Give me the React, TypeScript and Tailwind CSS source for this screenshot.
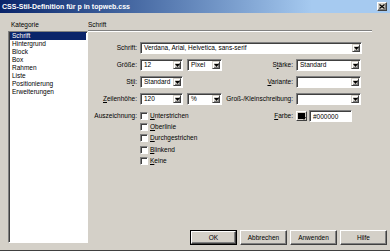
import React from "react";

const F = "font-['Liberation_Sans',Arial,sans-serif]";

function Arrow() {
  return (
    <div className="w-[8px] h-full shrink-0 bg-[#d4d0c8] border border-t-[#d4d0c8] border-l-[#d4d0c8] border-b-[#404040] border-r-[#404040] shadow-[inset_1px_1px_0_#ffffff,inset_-1px_-1px_0_#808080] flex items-center justify-center">
      <svg width="5" height="3" viewBox="0 0 5 3">
        <path d="M0 0h5L2.5 3z" fill="#000" />
      </svg>
    </div>
  );
}

function Combo({ className, text }: { className: string; text?: string }) {
  return (
    <div
      className={`h-[12px] flex bg-white border border-t-[#808080] border-l-[#808080] border-b-white border-r-white shadow-[inset_1px_1px_0_#404040] p-[1px] ${className}`}
    >
      <div className="flex-1 pl-[2px] text-[6.5px] leading-[8px] text-black whitespace-nowrap overflow-hidden">
        {text}
      </div>
      <Arrow />
    </div>
  );
}

function Check() {
  return (
    <div className="w-[8px] h-[8px] shrink-0 bg-white border border-t-[#808080] border-l-[#808080] border-b-white border-r-white shadow-[inset_1px_1px_0_#404040]" />
  );
}

function Btn({ children, def }: { children: React.ReactNode; def?: boolean }) {
  const inner = (
    <div className="w-full h-full flex items-center justify-center bg-[#d4d0c8] border border-t-white border-l-white border-b-[#404040] border-r-[#404040] shadow-[inset_-1px_-1px_0_#808080] text-[6.5px] leading-[8px] text-black">
      {children}
    </div>
  );
  if (def) {
    return <div className="w-[47px] h-[15px] border border-black">{inner}</div>;
  }
  return <div className="w-[47px] h-[15px]">{inner}</div>;
}

function Label({ children, className = "" }: { children: React.ReactNode; className?: string }) {
  return (
    <div className={`text-right text-[6.5px] leading-[12px] text-black whitespace-nowrap ${className}`}>
      {children}
    </div>
  );
}

const U = ({ c }: { c: string }) => <span className="underline underline-offset-[1px]">{c}</span>;

export default function App() {
  const cats = [
    "Schrift",
    "Hintergrund",
    "Block",
    "Box",
    "Rahmen",
    "Liste",
    "Positionierung",
    "Erweiterungen",
  ];
  const checks: [string, string][] = [
    ["U", "nterstrichen"],
    ["O", "berlinie"],
    ["D", "urchgestrichen"],
    ["B", "linkend"],
    ["K", "eine"],
  ];
  return (
    <div className={`w-[390px] h-[251px] bg-[#d4d0c8] flex flex-col overflow-hidden ${F}`}>
      {/* Title bar */}
      <div className="h-[13px] shrink-0 flex items-center bg-linear-to-r from-[#0a246a] to-[#a6caf0] to-80% pl-[2px] pr-[3px]">
        <div className="flex-1 text-white font-bold text-[7px] leading-[9px] whitespace-nowrap">
          CSS-Stil-Definition für p in topweb.css
        </div>
        <div className="w-[10px] h-[9px] bg-[#d4d0c8] border border-t-white border-l-white border-b-[#404040] border-r-[#404040] shadow-[inset_-1px_-1px_0_#808080] flex items-center justify-center">
          <svg width="6" height="5" viewBox="0 0 6 5">
            <path d="M0.5 0.5L5.5 4.5M5.5 0.5L0.5 4.5" stroke="#000" strokeWidth="1.2" />
          </svg>
        </div>
      </div>

      {/* Body */}
      <div className="h-[237px] flex">
        {/* Left column */}
        <div className="ml-[8px] w-[80px] flex flex-col">
          <div className="mt-[7px] h-[9px] pl-[3px] text-[6.5px] leading-[9px] text-black">Kategorie</div>
          <div className="mt-[2px] h-[212px] bg-white border border-t-[#808080] border-l-[#808080] border-b-white border-r-white shadow-[inset_1px_1px_0_#404040] pl-[1px] pr-[1px]">
            {cats.map((c, i) => (
              <div
                key={c}
                className={`h-[8px] pl-[2px] text-[6.5px] leading-[8px] ${
                  i === 0 ? "bg-[#0a246a] text-white" : "text-black"
                }`}
              >
                {c}
              </div>
            ))}
          </div>
        </div>

        {/* Right column */}
        <div className="flex-1 flex flex-col">
          <div className="w-[284px]">
            <div className="mt-[7px] h-[9px] text-[6.5px] leading-[9px] text-black">Schrift</div>
            <div className="mt-[1px] h-[2px] border-t border-t-[#808080] border-b border-b-white" />

            <div className="w-[274px] mt-[10px] flex flex-col gap-[5px]">
              <div className="flex h-[12px]">
                <Label className="w-[49px]">Schrift:</Label>
                <Combo className="ml-[3px] w-[222px]" text="Verdana, Arial, Helvetica, sans-serif" />
              </div>

              <div className="flex h-[12px]">
                <Label className="w-[49px]">Größe:</Label>
                <div className="ml-[3px] w-[82px] flex gap-[4px]">
                  <Combo className="w-[43px]" text="12" />
                  <Combo className="w-[35px]" text="Pixel" />
                </div>
                <Label className="flex-1">
                  S<U c="t" />ärke:
                </Label>
                <Combo className="ml-[3px] w-[65px]" text="Standard" />
                <div className="w-[1px]" />
              </div>

              <div className="flex h-[12px]">
                <Label className="w-[49px]">
                  St<U c="i" />l:
                </Label>
                <div className="ml-[3px] w-[82px] flex">
                  <Combo className="w-[43px]" text="Standard" />
                </div>
                <Label className="flex-1">
                  <U c="V" />ariante:
                </Label>
                <Combo className="ml-[3px] w-[65px]" text="" />
                <div className="w-[1px]" />
              </div>

              <div className="flex h-[12px]">
                <Label className="w-[49px]">
                  <U c="Z" />eilenhöhe:
                </Label>
                <div className="ml-[3px] w-[82px] flex gap-[4px]">
                  <Combo className="w-[43px]" text="120" />
                  <Combo className="w-[35px]" text="%" />
                </div>
                <Label className="flex-1">Groß-/Kleinschreibung:</Label>
                <Combo className="ml-[3px] w-[65px]" text="" />
                <div className="w-[1px]" />
              </div>
            </div>

            <div className="w-[274px] mt-[5px] flex">
              <div className="w-[49px] text-right text-[6.5px] leading-[11.33px] text-black whitespace-nowrap">
                Auszeichnung:
              </div>
              <div className="ml-[3px] flex flex-col">
                {checks.map(([a, b]) => (
                  <div key={a + b} className="h-[11.33px] flex items-center gap-[2px]">
                    <Check />
                    <span className="text-[6.5px] leading-[8px] text-black">
                      <U c={a} />
                      {b}
                    </span>
                  </div>
                ))}
              </div>
              <div className="flex-1 flex justify-end items-start">
                <div className="flex items-center h-[12px]">
                  <span className="text-[6.5px] leading-[8px] text-black">
                    <U c="F" />arbe:
                  </span>
                  <div className="ml-[3px] w-[11px] h-[10px] bg-[#d4d0c8] border border-t-white border-l-white border-b-[#404040] border-r-[#404040] relative">
                    <div className="absolute left-[1px] top-[1px] w-[7px] h-[6px] bg-black" />
                    <svg className="absolute right-0 bottom-0" width="4" height="3" viewBox="0 0 4 3">
                      <path d="M0 0h4L2 3z" fill="#000" />
                    </svg>
                  </div>
                  <div className="ml-[2px] w-[43px] h-[12px] bg-white border border-t-[#808080] border-l-[#808080] border-b-white border-r-white shadow-[inset_1px_1px_0_#404040] pl-[3px] pt-[1px] text-[6.5px] leading-[9px] text-black">
                    #000000
                  </div>
                </div>
              </div>
              <div className="w-[10px]" />
            </div>
          </div>

          <div className="flex-1" />
          <div className="flex justify-end gap-[3px] pr-[3px] pb-[5px]">
            <Btn def>OK</Btn>
            <Btn>Abbrechen</Btn>
            <Btn>Anwenden</Btn>
            <Btn>Hilfe</Btn>
          </div>
        </div>
      </div>
      <div className="h-[1px] bg-[#404040]" />
    </div>
  );
}
